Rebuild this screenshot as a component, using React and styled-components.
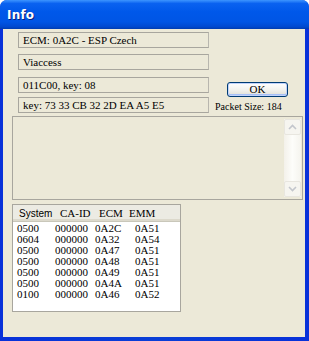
import React from "react";
import styled, { createGlobalStyle } from "styled-components";

const Global = createGlobalStyle`
  html, body { margin: 0; padding: 0; background: #ffffff; }
  body { width: 309px; height: 341px; overflow: hidden; }
`;

const Window = styled.div`
  width: 309px;
  height: 341px;
  box-sizing: border-box;
  display: flex;
  flex-direction: column;
  background: #0a3fd6;
  border-radius: 7px 7px 0 0;
  overflow: hidden;
  font-family: "Liberation Serif", "Times New Roman", serif;
  font-size: 11px;
  color: #000;
`;

const TitleBar = styled.div`
  height: 29px;
  flex: none;
  display: flex;
  align-items: center;
  padding-left: 7px;
  background: linear-gradient(
    to bottom,
    #3d95ff 0%,
    #0a62f0 12%,
    #0058ea 40%,
    #0055e5 75%,
    #0049d0 92%,
    #003cb0 100%
  );
`;

const Title = styled.span`
  font-family: "DejaVu Sans", "Liberation Sans", sans-serif;
  font-weight: bold;
  font-size: 12px;
  color: #fff;
  text-shadow: 1px 1px 0 #0a1f80;
  letter-spacing: 0.2px;
`;

const Frame = styled.div`
  flex: 1;
  display: flex;
  padding: 0 4px 4px 3px;
  background: linear-gradient(to right, #0831d9 0%, #0a3fd6 50%, #0831d9 100%);
`;

const Client = styled.div`
  flex: 1;
  background: #ece9d8;
  display: flex;
  flex-direction: column;
`;

const Top = styled.div`
  height: 81px;
  display: flex;
  padding: 3px 0 0 15px;
`;

const Fields = styled.div`
  width: 191px;
  display: flex;
  flex-direction: column;
`;

const Field = styled.div`
  height: 16px;
  box-sizing: border-box;
  margin-top: ${(p) => p.$gap || 0}px;
  border: 1px solid #a8a69e;
  border-right-color: #b8b6ae;
  display: flex;
  align-items: center;
  padding-left: 4px;
  white-space: nowrap;
`;

const Side = styled.div`
  flex: 1;
  display: flex;
  flex-direction: column;
  align-items: flex-start;
`;

const OkButton = styled.button`
  margin-top: 50px;
  margin-left: 18px;
  width: 61px;
  height: 15px;
  box-sizing: border-box;
  padding: 0;
  border: 1px solid #003c74;
  border-radius: 3px;
  background: linear-gradient(to bottom, #ffffff 0%, #f3f3ef 50%, #e5e4dc 85%, #d6d0c5 100%);
  box-shadow: inset 0 0 0 1px #c1d3fb, inset 0 -1px 0 1px #a6c0f7;
  font-family: "Liberation Serif", "Times New Roman", serif;
  font-size: 11px;
  color: #000;
  line-height: 13px;
`;

const PacketSize = styled.div`
  margin-top: 4px;
  margin-left: 6px;
  font-size: 10px;
  line-height: 12px;
  white-space: nowrap;
`;

const Memo = styled.div`
  margin: 3px 2px 0 9px;
  height: 84px;
  box-sizing: border-box;
  border: 1px solid #a8a69e;
  display: flex;
  justify-content: flex-end;
  padding: 2px 1px 2px 0;
`;

const ScrollBar = styled.div`
  width: 17px;
  display: flex;
  flex-direction: column;
  justify-content: space-between;
  background: linear-gradient(to right, #f3f1ea 0%, #fdfdfa 50%, #f5f4ee 100%);
`;

const ScrollBtn = styled.div`
  height: 16px;
  box-sizing: border-box;
  border: 1px solid #e8e6df;
  border-radius: 2px;
  background: #f6f5f0;
  display: flex;
  align-items: center;
  justify-content: center;
`;

const List = styled.div`
  margin: 4px 0 0 9px;
  width: 169px;
  height: 108px;
  box-sizing: border-box;
  border: 1px solid #a8a69e;
  background: #fff;
  display: flex;
  flex-direction: column;
`;

const Header = styled.div`
  height: 16px;
  flex: none;
  display: grid;
  grid-template-columns: 41px 39px 30px 1fr;
  align-items: center;
  padding-left: 6px;
  background: #ecebe3;
  border-bottom: 1px solid #c9c7ba;
  box-shadow: inset 0 -2px 0 #dcd9cc;
  font-size: 11px;
`;

const HeadCell = styled.span`
  font-family: ${(p) => (p.$sans ? '"Liberation Sans", Arial, sans-serif' : '"Liberation Serif", serif')};
  font-size: ${(p) => (p.$sans ? "10px" : "11px")};
  white-space: nowrap;
`;

const Rows = styled.div`
  padding: 1px 0 0 4px;
  display: flex;
  flex-direction: column;
`;

const Row = styled.div`
  height: 11px;
  display: grid;
  grid-template-columns: 38px 40px 40px 1fr;
  align-items: center;
  line-height: 11px;
  white-space: nowrap;
`;

const Chevron = ({ up }) => (
  <svg width="9" height="6" viewBox="0 0 9 6">
    <path
      d={up ? "M1 5 L4.5 1.5 L8 5" : "M1 1 L4.5 4.5 L8 1"}
      fill="none"
      stroke="#c3c6cc"
      strokeWidth="1.6"
    />
  </svg>
);

const rows = [
  ["0500", "000000", "0A2C", "0A51"],
  ["0604", "000000", "0A32", "0A54"],
  ["0500", "000000", "0A47", "0A51"],
  ["0500", "000000", "0A48", "0A51"],
  ["0500", "000000", "0A49", "0A51"],
  ["0500", "000000", "0A4A", "0A51"],
  ["0100", "000000", "0A46", "0A52"],
];

export default function App() {
  return (
    <>
      <Global />
      <Window>
        <TitleBar>
          <Title>Info</Title>
        </TitleBar>
        <Frame>
          <Client>
            <Top>
              <Fields>
                <Field>ECM: 0A2C - ESP Czech</Field>
                <Field $gap={6}>Viaccess</Field>
                <Field $gap={7}>011C00, key: 08</Field>
                <Field $gap={4}>key: 73 33 CB 32 2D EA A5 E5</Field>
              </Fields>
              <Side>
                <OkButton>OK</OkButton>
                <PacketSize>Packet Size: 184</PacketSize>
              </Side>
            </Top>
            <Memo>
              <ScrollBar>
                <ScrollBtn>
                  <Chevron up />
                </ScrollBtn>
                <ScrollBtn>
                  <Chevron />
                </ScrollBtn>
              </ScrollBar>
            </Memo>
            <List>
              <Header>
                <HeadCell $sans>System</HeadCell>
                <HeadCell>CA-ID</HeadCell>
                <HeadCell>ECM</HeadCell>
                <HeadCell>EMM</HeadCell>
              </Header>
              <Rows>
                {rows.map((r, i) => (
                  <Row key={i}>
                    {r.map((c, j) => (
                      <span key={j}>{c}</span>
                    ))}
                  </Row>
                ))}
              </Rows>
            </List>
          </Client>
        </Frame>
      </Window>
    </>
  );
}
